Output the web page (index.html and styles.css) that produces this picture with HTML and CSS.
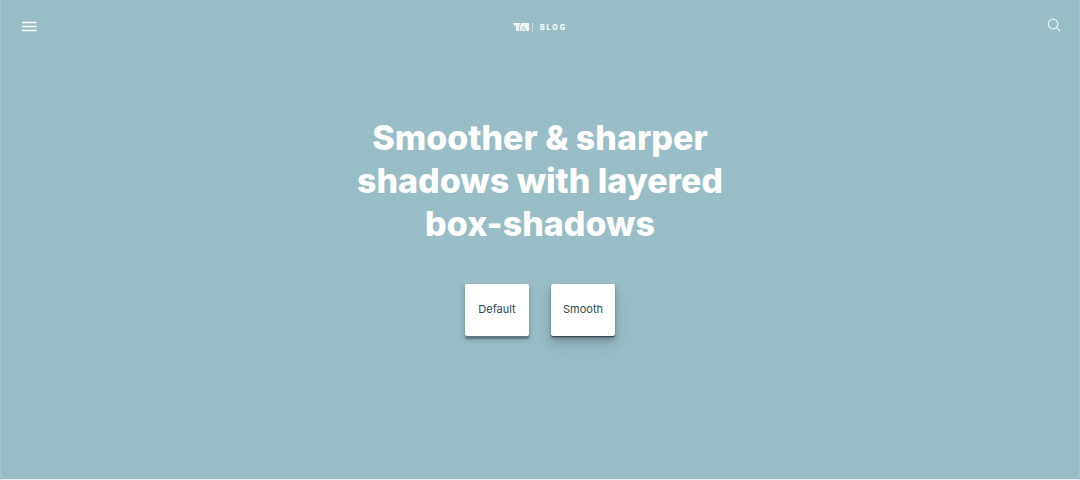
FILE: index.html
```
<!DOCTYPE html>
<html lang="en">
<head>
    <meta charset="utf-8">
    <meta name="viewport" content="width=device-width, initial-scale=1">
    <title>Smoother &amp; sharper shadows with layered box-shadows</title>
    <link rel="stylesheet" href="styles.css">
</head>
<body>
<header class="top-bar">
    <button type="button" class="icon-button menu-button" aria-label="Menu">
        <svg width="16" height="12" viewBox="0 0 16 12">
            <path d="M1 1.500h14.500M1 5.500h14.500M1 9.500h14.500" stroke="currentColor" stroke-width="1.600"/>
        </svg>
    </button>
    <a href="#" class="brand">
        <svg class="logo" width="16" height="8" viewBox="0 0 16 8" aria-hidden="true">
            <path d="M0 0H7L5.500 8H3V3H1.500zM8 0H16V8H13.500L10.500 3L8 8H6.200z" fill="currentColor" opacity="0.850"/>
            <path d="M10.500 4.500L12.500 8H8.700z" fill="currentColor" opacity="0.850"/>
        </svg>
        <span class="brand-name">BLOG</span>
    </a>
    <button type="button" class="icon-button search-button" aria-label="Search">
        <svg width="14" height="14" viewBox="0 0 14 14" fill="none" stroke="currentColor" stroke-width="1.200">
            <circle cx="6" cy="6" r="4.800"/>
            <path d="M9.500 9.500L13 13"/>
        </svg>
    </button>
</header>

<main class="hero">
    <h1>Smoother &amp; sharper shadows with layered box-shadows</h1>
    <div class="cards">
        <div class="card card-default">Default</div>
        <div class="card card-smooth">Smooth</div>
    </div>
</main>
</body>
</html>
```
FILE: styles.css
```
* {
    box-sizing: border-box;
}

body {
    margin: 0;
    min-height: 100vh;
    font-family: Inter, "Liberation Sans", sans-serif;
    color: #fff;
    background-color: #98bdc6;
    border: 1px solid #a6c7cf;
    border-top: none;
    border-bottom-color: #e4eef0;
}

/* Header */
.top-bar {
    display: grid;
    grid-template-columns: 1fr auto 1fr;
    align-items: center;
    height: 54px;
    padding: 0 18px;
}

.icon-button {
    display: flex;
    padding: 0;
    border: none;
    background: none;
    color: #eaf2f4;
    cursor: pointer;
}

.menu-button {
    justify-self: start;
    padding-left: 2px;
    color: #fff;
}

.search-button {
    justify-self: end;
    padding-bottom: 4px;
}

.brand {
    display: flex;
    align-items: center;
    color: #fff;
    text-decoration: none;
}

.brand-name {
    margin-left: 3px;
    padding-left: 7px;
    border-left: 1px solid #c4dade;
    font-size: 7px;
    line-height: 9px;
    font-weight: 800;
    letter-spacing: 2px;
}

/* Hero */
.hero {
    display: flex;
    flex-direction: column;
    align-items: center;
    padding: 62px 20px 0;
}

.hero h1 {
    max-width: 400px;
    margin: 0;
    font-size: 34px;
    line-height: 43px;
    font-weight: 800;
    text-align: center;
}

.cards {
    display: flex;
    gap: 22px;
    margin-top: 39px;
}

.card {
    width: 64px;
    padding: 16px 0 18px;
    border-radius: 2px;
    background-color: #fff;
    color: #2d4a54;
    font-size: 11px;
    line-height: 18px;
    text-align: center;
}

.card-default {
    box-shadow:
        0 3px 1px rgba(70, 90, 100, 0.5),
        0 3px 5px rgba(70, 90, 100, 0.5);
}

.card-smooth {
    box-shadow:
        0 1px 1px rgba(0, 0, 0, 0.5),
        0 2px 2px rgba(60, 75, 85, 0.2),
        0 4px 4px rgba(60, 75, 85, 0.2),
        0 6px 8px rgba(60, 75, 85, 0.2),
        0 8px 16px rgba(60, 75, 85, 0.1);
}
```
